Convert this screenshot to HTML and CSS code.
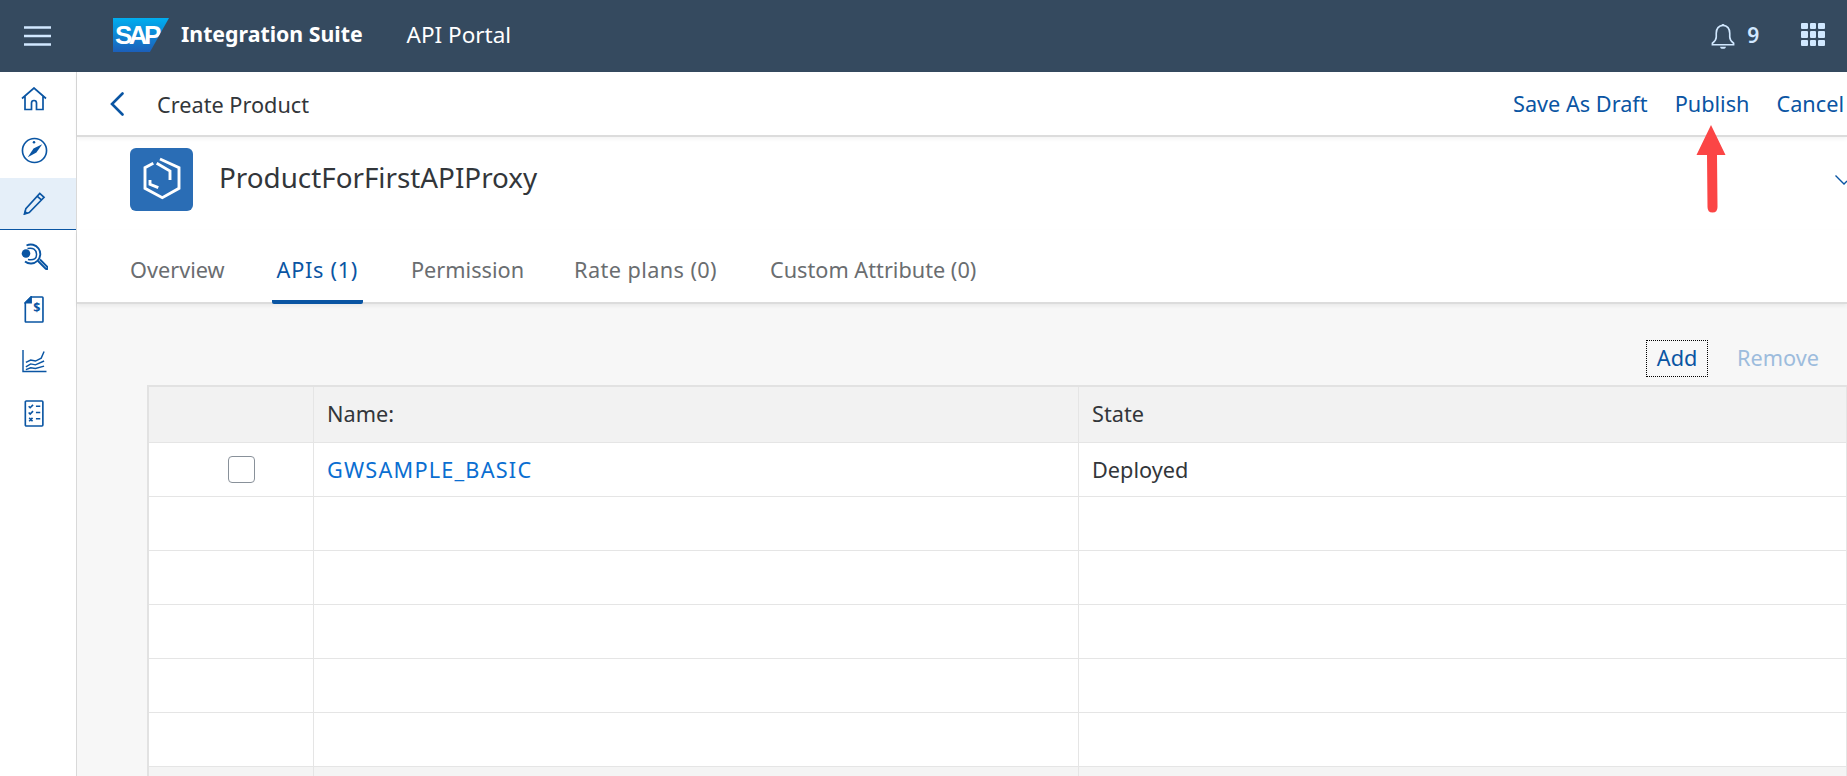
FILE: index.html
```html
<!DOCTYPE html>
<html lang="en">
<head>
  <meta charset="UTF-8">
  <title>Create Product - API Portal</title>
  <link rel="stylesheet" href="styles.css">
</head>
<body>

  <header class="shell-bar">
    <svg class="burger" width="27" height="20" viewBox="0 0 27 20"><path d="M0 1.500h27M0 10h27M0 18.500h27" stroke="#d1e8ff" stroke-width="2.600"/></svg>
    <div class="sap-logo"><span>SAP</span></div>
    <span class="product">Integration Suite</span>
    <span class="app-name">API Portal</span>
    <div class="shell-right">
      <svg class="bell" width="24" height="27" viewBox="0 0 24 28" fill="none" stroke="#d1e8ff" stroke-width="1.700">
        <path d="M12 2.500c-4.500 0-7 3.500-7 8v4c0 3-2 5-4 6.500v1.500h22V21c-2-1.500-4-3.500-4-6.500v-4c0-4.500-2.500-8-7-8z"/>
        <path d="M9 24.500h6c0 3-6 3-6 0zM10 2.500q2-3 4 0z" fill="#d1e8ff" stroke="none"/>
      </svg>
      <span class="bell-count">9</span>
      <div class="launcher">
        <i></i><i></i><i></i><i></i><i></i><i></i><i></i><i></i><i></i>
      </div>
    </div>
  </header>

  <div class="app">
    <nav class="side-nav">
      <a class="nav-item nav-up">
        <svg width="26" height="24" viewBox="0 0 26 24" fill="none" stroke="#0a55a3" stroke-width="1.700"><path d="M1 11.500 13 1l12 10.500M4 9v13.500h6.500V16q0-2.500 2.500-2.500t2.500 2.500v6.500H22V9"/></svg>
      </a>
      <a class="nav-item nav-up">
        <svg width="27" height="27" viewBox="0 0 28 28" fill="none" stroke="#0a55a3" stroke-width="1.700"><circle cx="14" cy="14" r="12.500"/><path d="M22 7.500 16 16l-9 5 6-9z" fill="#0a55a3" stroke="none"/><circle cx="13.500" cy="5.500" r="1.300" fill="#0a55a3" stroke="none"/></svg>
      </a>
      <a class="nav-item nav-active">
        <svg width="24" height="23" viewBox="0 0 24 24" fill="none" stroke="#0a55a3" stroke-width="1.700"><path d="M18 1.500 22.500 5.500 7 21.500 2 23l1.500-5.500zM15.500 4.500l4.500 4"/><path d="M1.500 23.500l1-4.500 3.500 3.500z" fill="#0a55a3" stroke="none"/></svg>
      </a>
      <a class="nav-item">
        <svg width="27" height="27" viewBox="0 0 27 27" fill="none" stroke="#0a55a3" stroke-width="1.900"><path d="M5.500 2.500A9.500 9.500 0 1 1 4 18.500"/><path d="M6.500 5.500Q15 4 15.500 11T7 16.500" stroke-width="1.500"/><circle cx="5" cy="10.500" r="4.300" fill="#0a55a3" stroke="none"/><path d="M17 18l7.500 7.500q1 1 2 .5V24l-7.500-7.500"/></svg>
      </a>
      <a class="nav-item nav-down">
        <svg width="20" height="27" viewBox="0 0 20 28" fill="none" stroke="#0a55a3" stroke-width="1.700"><path d="M7 1h11.500q.8 0 .8.800v24.400q0 .8-.8.800H1.800q-.8 0-.8-.8V7z"/><path d="M1 7l6-6v6z" fill="#0a55a3"/><text class="dollar" x="13" y="17">$</text></svg>
      </a>
      <a class="nav-item nav-down">
        <svg width="25" height="23" viewBox="0 0 26 24" fill="none" stroke="#0a55a3" stroke-width="1.500"><path d="M1 0v22.500h24.500M4 13l5-2.500 5 1 6-3 3-7M4 17.500l5-3 5 1 9-4M4 20.500l5-2 5 .8 9-2.500"/></svg>
      </a>
      <a class="nav-item nav-down">
        <svg width="20" height="27" viewBox="0 0 20 28" fill="none" stroke="#0a55a3" stroke-width="1.700"><rect x="1" y="1" width="18.200" height="26" rx="1"/><path d="M4.500 6.500l1.500 1.500 3-3M4.500 13l1.500 1.500 3-3M5 18.500l3.500 3.500M8.500 18.500 5 22M12 6.500h4.500M12 13h4.500M12 19.500h4.500"/></svg>
      </a>
    </nav>

    <main class="page">
      <div class="page-head">
        <svg class="back" width="14" height="24" viewBox="0 0 14 24" fill="none" stroke="#0a55a3" stroke-width="2.600" stroke-linecap="round"><path d="M12.500 1.500 2 12l10.500 10.500"/></svg>
        <span class="page-title">Create Product</span>
        <div class="page-actions">
          <a>Save As Draft</a>
          <a>Publish</a>
          <a>Cancel</a>
        </div>
      </div>

      <section class="object-head">
        <div class="object-icon">
          <svg width="63" height="63" viewBox="0 0 63 63" fill="none" stroke="#fff" stroke-width="2.900">
            <path d="M23.300 15.300 15 19.700v20.600l17.300 9.400L49 40.300V19.700L30 11"/>
            <path d="M26.700 15.300 40 23v9"/>
            <path d="M20 32v4.300l8.300 3.400"/>
          </svg>
        </div>
        <h1 class="object-title">ProductForFirstAPIProxy</h1>
        <svg class="collapse" width="12" height="10" viewBox="0 0 12 10" fill="none" stroke="#0a55a3" stroke-width="1.400"><path d="M0.500 0.500 9 9l3-3"/></svg>
      </section>

      <div class="tabs">
        <a class="tab tab-first">Overview</a>
        <a class="tab tab-active">APIs (1)</a>
        <a class="tab tab-tight">Permission</a>
        <a class="tab tab-wide">Rate plans (0)</a>
        <a class="tab">Custom Attribute (0)</a>
      </div>

      <div class="content">
        <div class="toolbar">
          <button class="btn btn-focus">Add</button>
          <button class="btn btn-off">Remove</button>
        </div>
        <div class="grid-table">
          <div class="cell head"></div>
          <div class="cell head">Name:</div>
          <div class="cell head">State</div>

          <div class="cell check"><span class="checkbox"></span></div>
          <div class="cell"><a class="link">GWSAMPLE_BASIC</a></div>
          <div class="cell">Deployed</div>

          <div class="cell"></div><div class="cell"></div><div class="cell"></div>
          <div class="cell"></div><div class="cell"></div><div class="cell"></div>
          <div class="cell"></div><div class="cell"></div><div class="cell"></div>
          <div class="cell"></div><div class="cell"></div><div class="cell"></div>
          <div class="cell"></div><div class="cell"></div><div class="cell"></div>

          <div class="cell foot"></div><div class="cell foot"></div><div class="cell foot"></div>
        </div>
      </div>
    </main>
  </div>

  <!-- red arrow drawn over the screenshot -->
  <svg class="callout" width="30" height="88" viewBox="0 0 30 88"><path d="M15 0 29.500 30H21L21.500 82q0 5.500-5 5.500t-5-5.500L11 30H.5z" fill="#fb4545"/></svg>

</body>
</html>
```

FILE: styles.css
```css
* {
  box-sizing: border-box;
}
html, body {
  margin: 0;
  height: 776px;
  overflow: hidden;
}
body {
  position: relative;
  font-family: "Noto Sans", "Open Sans", sans-serif;
  font-size: 21.700px;
  color: #32363a;
  background: #fff;
}
a {
  cursor: pointer;
}

/* shell bar */
.shell-bar {
  display: flex;
  align-items: center;
  height: 72px;
  background: #354a5f;
  color: #fff;
  padding-left: 24px;
}
.burger {
  margin-right: 62px;
}
.sap-logo {
  flex: none;
  width: 56px;
  height: 34px;
  margin-top: -2px;
  margin-right: 12px;
  padding-left: 2px;
  background: linear-gradient(#00aeef, #1c5fb9);
  clip-path: polygon(0 0, 100% 0, 66% 100%, 0 100%);
  color: #fff;
  font-family: "Liberation Sans", sans-serif;
  font-weight: 700;
  font-size: 26px;
  line-height: 35px;
  letter-spacing: -3.500px;
}
.product {
  font-weight: 700;
  font-size: 21.300px;
  margin-right: 44px;
  margin-top: -5px;
}
.app-name {
  font-size: 22.500px;
  margin-top: -4px;
}
.shell-right {
  display: flex;
  align-items: center;
  margin-left: auto;
  padding-right: 22px;
}
.bell {
  margin-right: 12px;
}
.bell-count {
  color: #d1e8ff;
  font-size: 21px;
  font-weight: 600;
  margin-right: 42px;
  margin-top: -3px;
}
.launcher {
  display: grid;
  grid-template-columns: repeat(3, 6.600px);
  grid-auto-rows: 6.600px;
  gap: 2px;
  margin-top: -3px;
}
.launcher i {
  background: #d1e8ff;
  border-radius: 1px;
}

/* left nav */
.app {
  display: flex;
  height: 704px;
}
.side-nav {
  flex: none;
  width: 77px;
  border-right: 1px solid #d9d9d9;
  padding-top: 2px;
  display: flex;
  flex-direction: column;
}
.nav-item {
  display: flex;
  align-items: center;
  justify-content: center;
  height: 52px;
  padding-right: 8px;
}
.nav-up {
  padding-bottom: 3px;
}
.nav-down {
  padding-top: 3px;
}
.nav-active {
  background: #e5eff9;
  border-bottom: 1px solid #0a55a3;
}
.dollar {
  font-size: 13px;
  font-weight: 700;
  fill: #0a55a3;
  stroke: none;
  text-anchor: middle;
}

/* page */
.page {
  flex: 1;
  min-width: 0;
  display: flex;
  flex-direction: column;
}
.page-head {
  display: flex;
  align-items: center;
  flex: none;
  height: 65px;
  padding-left: 33px;
  border-bottom: 2px solid #dcdcdc;
  box-shadow: 0 2px 4px rgba(0, 0, 0, .05);
}
.back {
  margin-right: 33px;
}
.page-title {
  margin-top: 2px;
}
.page-actions {
  display: flex;
  gap: 27px;
  margin-left: auto;
  color: #0a55a3;
  margin-right: 3px;
}
.object-head {
  position: relative;
  flex: none;
  display: flex;
  align-items: flex-start;
  height: 93px;
  padding: 11px 0 0 53px;
}
.object-icon {
  flex: none;
  width: 63px;
  height: 63px;
  background: #2a6db5;
  border-radius: 6px;
}
.object-title {
  margin: 3px 0 0 26px;
  font-size: 27.800px;
  font-weight: 400;
  line-height: 52px;
}
.collapse {
  margin-left: auto;
  margin-top: 27px;
}
.tabs {
  flex: none;
  display: flex;
  height: 74px;
  padding-left: 48px;
  border-bottom: 2px solid #dcdcdc;
  box-shadow: 0 2px 4px rgba(0, 0, 0, .06);
  position: relative;
}
.tab {
  padding: 0 5px;
  margin-right: 43px;
  height: 74px;
  line-height: 80px;
  color: #6a6d70;
}
.tab-first {
  margin-right: 42px;
}
.tab-tight {
  margin-right: 40px;
}
.tab-wide {
  letter-spacing: .4px;
}
.tab-active {
  color: #0a55a3;
  letter-spacing: .7px;
  border-bottom: 4px solid #0a55a3;
  border-radius: 0 0 2px 2px;
}
.content {
  flex: 1;
  min-height: 0;
  overflow: hidden;
  background: #f7f7f7;
  padding: 36px 0 0 70px;
}
.toolbar {
  display: flex;
  justify-content: flex-end;
  gap: 28px;
  height: 45px;
  padding-right: 27px;
}
.btn {
  font: inherit;
  height: 37px;
  padding: 0 0 3px;
  background: none;
  border: 1px solid transparent;
}
.btn-focus {
  color: #0a55a3;
  border: 1px dotted #000;
  width: 62px;
}
.btn-off {
  color: #9dbcdd;
}
.grid-table {
  display: grid;
  grid-template-columns: 165px 765px 1fr;
  grid-template-rows: 56px repeat(7, 54px);
  border-top: 2px solid #e2e2e2;
  border-left: 2px solid #e2e2e2;
  background: #fff;
}
.cell {
  display: flex;
  align-items: center;
  padding-left: 13px;
  border-bottom: 1px solid #e5e5e5;
  border-right: 1px solid #e5e5e5;
  background: #fff;
}
.head {
  background: #f2f2f2;
  padding-bottom: 3px;
}
.foot {
  background: #f4f4f4;
}
.check {
  padding-left: 79px;
}
.checkbox {
  width: 27px;
  height: 27px;
  background: #fff;
  border: 1px solid #89919a;
  border-radius: 4px;
}
.link {
  color: #0a6ed1;
  letter-spacing: 1.200px;
}

/* annotation on top of the screen */
.callout {
  position: absolute;
  left: 1696px;
  top: 125px;
}
```
